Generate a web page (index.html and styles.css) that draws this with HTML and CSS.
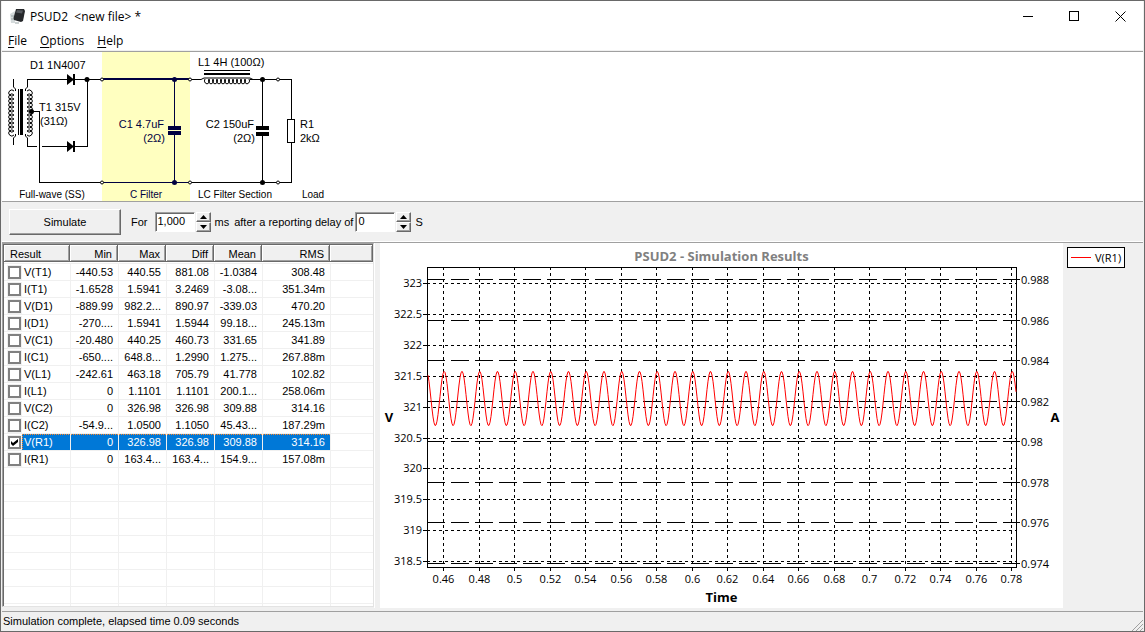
FILE: index.html
```
<!DOCTYPE html>
<html lang="en">
<head>
    <meta charset="UTF-8">
    <meta name="viewport" content="width=device-width, initial-scale=1.0">
    <title>PSUD2</title>
    <link rel="stylesheet" href="styles.css">
</head>
<body>
    <div class="window">
        <header class="titlebar">
            <svg class="app-icon" width="16" height="16" viewBox="0 0 16 16">
                <path d="M0 6l5-3v12H1z" fill="#d4dadb"/>
                <path d="M1 8h3M1 11h3M5 15h4" stroke="#9aa5a6"/>
                <path d="M6 1l8 0 1 2-2 10-2 1-7-2-.5-2z" fill="#26282b"/>
                <path d="M7 2l6 .5-1 3-6-1z" fill="#55595e"/>
            </svg>
            <span class="title">PSUD2&nbsp; &lt;new file&gt; *</span>
            <div class="window-buttons">
                <button aria-label="Minimize"><svg width="11" height="11"><path d="M0 5.500h10"/></svg></button>
                <button aria-label="Maximize"><svg width="11" height="11"><path d="M.5.5h9v9h-9z"/></svg></button>
                <button aria-label="Close"><svg width="11" height="11" class="smooth"><path d="M.5.5l10 10M10.500.500l-10 10"/></svg></button>
            </div>
        </header>
        <nav class="menu">
            <button><u>F</u>ile</button>
            <button><u>O</u>ptions</button>
            <button><u>H</u>elp</button>
        </nav>

        <section class="schematic">
            <svg width="340" height="149" viewBox="2 52 340 149">
                <rect x="102" y="52" width="88" height="149" fill="#ffffc0"/>
                <!-- transformer -->
                <g class="coil">
                    <path d="M13.500 79v8l2 2v2M13.500 145v-7l2-2v-2M27.500 79v8l-2 2v2M27.500 146v-8l-2-2v-2"/>
                    <path d="M14 91a3 3 0 1 0 0 4a3 3 0 1 0 0 4a3 3 0 1 0 0 4a3 3 0 1 0 0 4a3 3 0 1 0 0 4a3 3 0 1 0 0 4a3 3 0 1 0 0 4a3 3 0 1 0 0 4a3 3 0 1 0 0 4a3 3 0 1 0 0 4a3 3 0 1 0 0 4"/>
                    <path d="M27 91a3 3 0 1 1 0 4a3 3 0 1 1 0 4a3 3 0 1 1 0 4a3 3 0 1 1 0 4a3 3 0 1 1 0 4a3 3 0 1 1 0 4a3 3 0 1 1 0 4a3 3 0 1 1 0 4a3 3 0 1 1 0 4a3 3 0 1 1 0 4a3 3 0 1 1 0 4"/>
                </g>
                <path class="wire" d="M18.500 89v46M22.500 89v46"/>
                <path class="wire thick" d="M21 89v46"/>
                <!-- rectifier -->
                <path class="wire" d="M27 79.500h75M27 146.500h10M42 146.500h45M87.500 79v68M32 111.500h7.500v71h63"/>
                <path d="M67 74l7 5.500-7 5.500zM67 141l7 5.500-7 5.500z"/>
                <path class="wire thick" d="M74 74v11M74 141v11"/>
                <circle cx="87" cy="79.500" r="2.500"/>
                <circle cx="31.500" cy="111.500" r="2.500"/>
                <!-- C filter, selected -->
                <g class="selected">
                    <path class="wire thick" d="M103 79h86"/>
                    <path class="wire" d="M103 182.500h87M174.500 79v47M174.500 135v47"/>
                    <path d="M168 126h13v4h-13zM168 131h13v4h-13z"/>
                    <circle cx="174.500" cy="79.500" r="2.500"/>
                    <circle cx="174.500" cy="182.500" r="2.500"/>
                    <text x="164" y="128" class="end">C1 4.7uF</text>
                    <text x="165" y="142" class="end">(2Ω)</text>
                    <text x="146" y="198" class="name">C Filter</text>
                </g>
                <!-- LC section -->
                <path class="wire" d="M190 79.500h11M204 70.500h46M250 79.500h41.500v40M291.500 142v40.500H190M262.500 79v47M262.500 136v46"/>
                <path class="wire thick" d="M204 74h46"/>
                <path class="coil" d="M201 79.500l3-1.500h46l3 1.500M205 79a2.500 3 0 1 0 4 0a2.500 3 0 1 0 4 0a2.500 3 0 1 0 4 0a2.500 3 0 1 0 4 0a2.500 3 0 1 0 4 0a2.500 3 0 1 0 4 0a2.500 3 0 1 0 4 0a2.500 3 0 1 0 4 0a2.500 3 0 1 0 4 0a2.500 3 0 1 0 4 0a2.500 3 0 1 0 4 0"/>
                <path d="M256 126h13v4h-13zM256 132h13v4h-13z"/>
                <circle cx="262.500" cy="79.500" r="2.500"/>
                <circle cx="262.500" cy="182.500" r="2.500"/>
                <path class="wire" d="M287.500 119.500h7v23h-7z"/>
                <g class="terminal">
                    <circle cx="102" cy="79.500" r="1.500"/>
                    <circle cx="102" cy="182.500" r="1.500"/>
                    <circle cx="190" cy="79.500" r="1.500"/>
                    <circle cx="190" cy="182.500" r="1.500"/>
                    <circle cx="278" cy="79.500" r="1.500"/>
                    <circle cx="278" cy="182.500" r="1.500"/>
                </g>
                <text x="30" y="69">D1 1N4007</text>
                <text x="39" y="111">T1 315V</text>
                <text x="40" y="125">(31Ω)</text>
                <text x="198" y="66">L1 4H (100Ω)</text>
                <text x="254" y="128" class="end">C2 150uF</text>
                <text x="255" y="142" class="end">(2Ω)</text>
                <text x="300" y="128">R1</text>
                <text x="300" y="142">2kΩ</text>
                <text x="52" y="198" class="name">Full-wave (SS)</text>
                <text x="235" y="198" class="name">LC Filter Section</text>
                <text x="313" y="198" class="name">Load</text>
            </svg>
        </section>

        <form class="toolbar" onsubmit="return false">
            <button class="simulate">Simulate</button>
            <label for="duration">For</label>
            <div class="spin">
                <input type="text" id="duration" value="1,000">
                <div class="spin-buttons">
                    <button type="button" aria-label="Increase duration"><svg width="7" height="4"><path d="M0 4l3.500-4L7 4z"/></svg></button>
                    <button type="button" aria-label="Decrease duration"><svg width="7" height="4"><path d="M0 0h7L3.500 4z"/></svg></button>
                </div>
            </div>
            <span class="unit">ms</span>
            <label for="delay" class="delay">after a reporting delay of</label>
            <div class="spin">
                <input type="text" id="delay" value="0">
                <div class="spin-buttons">
                    <button type="button" aria-label="Increase delay"><svg width="7" height="4"><path d="M0 4l3.500-4L7 4z"/></svg></button>
                    <button type="button" aria-label="Decrease delay"><svg width="7" height="4"><path d="M0 0h7L3.500 4z"/></svg></button>
                </div>
            </div>
            <span class="unit">S</span>
        </form>

        <main class="content">
            <div class="list" id="list">
                <table>
                    <colgroup>
                        <col class="col-name"><col class="col-num"><col class="col-num"><col class="col-num"><col class="col-num"><col class="col-rms"><col>
                    </colgroup>
                    <thead>
                        <tr><th>Result</th><th>Min</th><th>Max</th><th>Diff</th><th>Mean</th><th>RMS</th><th></th></tr>
                    </thead>
                    <tbody id="rows">
                        <tr><td><label><input type="checkbox">V(T1)</label></td><td>-440.53</td><td>440.55</td><td>881.08</td><td>-1.0384</td><td>308.48</td><td></td></tr>
                        <tr><td><label><input type="checkbox">I(T1)</label></td><td>-1.6528</td><td>1.5941</td><td>3.2469</td><td>-3.08...</td><td>351.34m</td><td></td></tr>
                        <tr><td><label><input type="checkbox">V(D1)</label></td><td>-889.99</td><td>982.2...</td><td>890.97</td><td>-339.03</td><td>470.20</td><td></td></tr>
                        <tr><td><label><input type="checkbox">I(D1)</label></td><td>-270....</td><td>1.5941</td><td>1.5944</td><td>99.18...</td><td>245.13m</td><td></td></tr>
                        <tr><td><label><input type="checkbox">V(C1)</label></td><td>-20.480</td><td>440.25</td><td>460.73</td><td>331.65</td><td>341.89</td><td></td></tr>
                        <tr><td><label><input type="checkbox">I(C1)</label></td><td>-650....</td><td>648.8...</td><td>1.2990</td><td>1.275...</td><td>267.88m</td><td></td></tr>
                        <tr><td><label><input type="checkbox">V(L1)</label></td><td>-242.61</td><td>463.18</td><td>705.79</td><td>41.778</td><td>102.82</td><td></td></tr>
                        <tr><td><label><input type="checkbox">I(L1)</label></td><td>0</td><td>1.1101</td><td>1.1101</td><td>200.1...</td><td>258.06m</td><td></td></tr>
                        <tr><td><label><input type="checkbox">V(C2)</label></td><td>0</td><td>326.98</td><td>326.98</td><td>309.88</td><td>314.16</td><td></td></tr>
                        <tr><td><label><input type="checkbox">I(C2)</label></td><td>-54.9...</td><td>1.0500</td><td>1.1050</td><td>45.43...</td><td>187.29m</td><td></td></tr>
                        <tr class="active"><td><label><input type="checkbox" checked>V(R1)</label></td><td>0</td><td>326.98</td><td>326.98</td><td>309.88</td><td>314.16</td><td></td></tr>
                        <tr><td><label><input type="checkbox">I(R1)</label></td><td>0</td><td>163.4...</td><td>163.4...</td><td>154.9...</td><td>157.08m</td><td></td></tr>
                    </tbody>
                </table>
            </div>
            <div class="splitter"></div>
            <div class="chart" id="chart"></div>
            <aside class="legend">
                <div class="legend-box">
                    <span class="legend-line"></span>
                    <span>V(R1)</span>
                </div>
            </aside>
        </main>

        <footer class="status">
            <span>Simulation complete, elapsed time 0.09 seconds</span>
            <svg class="grip" width="12" height="12"><path d="M1 12L12 1M5 12l7-7M9 12l3-3"/></svg>
        </footer>
    </div>
    <script src="script.js"></script>
</body>
</html>
```

FILE: styles.css
```
* {
    box-sizing: border-box;
}
body {
    margin: 0;
    font-family: "Liberation Sans", Arial, sans-serif;
    font-size: 11px;
    color: #000;
    background: #f0f0f0;
}
button {
    font: inherit;
    color: inherit;
    padding: 0;
    border: none;
    background: none;
}
svg {
    display: block;
}
.window {
    display: flex;
    flex-direction: column;
    height: 100vh;
    border: 1px solid #696969;
    padding: 0 1px;
}

/* title and menu */
.titlebar {
    display: flex;
    align-items: center;
    height: 30px;
    padding-left: 8px;
    background: #fff;
    font: 12px "Open Sans", "Noto Sans", sans-serif;
}
.title {
    margin-left: 4px;
}
.window-buttons {
    display: flex;
    margin-left: auto;
}
.window-buttons button {
    display: flex;
    align-items: center;
    justify-content: center;
    width: 46px;
    height: 28px;
}
.window-buttons path {
    fill: none;
    stroke: #000;
    shape-rendering: crispEdges;
}
.window-buttons .smooth path {
    shape-rendering: auto;
}
.menu {
    display: flex;
    gap: 13px;
    height: 20px;
    padding-left: 6px;
    background: #fff;
    border-bottom: 1px solid #f0f0f0;
    font: 12px/19px "Open Sans", "Noto Sans", sans-serif;
}
.menu u {
    text-underline-offset: 2px;
}

/* circuit */
.schematic {
    height: 151px;
    overflow: hidden;
    background: #fff;
    border-top: 1px solid #a0a0a0;
    border-bottom: 1px solid #a0a0a0;
}
.schematic text {
    font-size: 11px;
}
.schematic .end {
    text-anchor: end;
}
.schematic .name {
    font-size: 10px;
    text-anchor: middle;
}
.wire {
    fill: none;
    stroke: #000;
    shape-rendering: crispEdges;
}
.thick {
    stroke-width: 2;
}
.coil {
    fill: none;
    stroke: #000;
}
.selected {
    fill: #000040;
}
.selected .wire {
    fill: none;
    stroke: #000040;
}
.terminal {
    fill: #fff;
    stroke: #000;
}

/* toolbar */
.toolbar {
    display: flex;
    align-items: center;
    height: 40px;
    padding-left: 7px;
    border-bottom: 1px solid #fff;
}
.simulate {
    width: 112px;
    height: 26px;
    margin-right: 10px;
    border: 1px solid;
    border-color: #fff #696969 #696969 #fff;
    box-shadow: inset -1px -1px #a0a0a0;
}
.spin {
    display: flex;
    align-items: center;
    gap: 1px;
    margin: 0 4px 0 7px;
}
.delay {
    margin-left: 5px;
}
.delay + .spin {
    margin-left: 2px;
}
.spin input {
    width: 40px;
    height: 20px;
    padding: 0 2px 2px;
    border: 1px solid;
    border-color: #a0a0a0 #fff #fff #a0a0a0;
    box-shadow: inset 1px 1px #696969;
    background: #fff;
    font: inherit;
}
.spin-buttons button {
    display: flex;
    align-items: center;
    justify-content: center;
    width: 15px;
    height: 10px;
    border: 1px solid;
    border-color: #fff #696969 #696969 #fff;
    box-shadow: inset -1px -1px #a0a0a0;
}

/* results list */
.content {
    display: flex;
    flex: 1;
    min-height: 0;
    border-top: 1px solid #a0a0a0;
}
.list {
    flex: none;
    width: 372px;
    margin-bottom: 1px;
    overflow: hidden;
    background: #fff;
    border: 1px solid;
    border-color: #a0a0a0 #e3e3e3 #e3e3e3 #a0a0a0;
}
table {
    width: 100%;
    table-layout: fixed;
    border-spacing: 0;
    border-top: 1px solid #696969;
    border-left: 1px solid #696969;
}
.col-name {
    width: 66px;
}
.col-num {
    width: 48px;
}
.col-rms {
    width: 68px;
}
th {
    height: 18px;
    padding: 0 6px 0 0;
    font-weight: normal;
    text-align: right;
    line-height: 16px;
    background: #f0f0f0;
    background-clip: padding-box;
    border-bottom: 1px solid #fff;
    box-shadow: inset -1px -1px #696969, inset 1px 1px #fff, inset -2px -2px #a0a0a0;
}
th:first-child {
    padding-left: 6px;
    text-align: left;
}
td {
    height: 17px;
    padding: 0 5px 0 0;
    line-height: 16px;
    text-align: right;
    white-space: nowrap;
    border-top: 1px solid #f0f0f0;
    border-left: 1px solid #f0f0f0;
}
td:first-child {
    padding: 0 0 0 4px;
    border-left: none;
    text-align: left;
}
td label {
    display: flex;
    align-items: center;
    gap: 3px;
    height: 16px;
}
td input {
    appearance: none;
    width: 13px;
    height: 13px;
    margin: 1px 0 0;
    border: 2px solid #808080;
    background: #fff;
    box-shadow: 0 0 0 1px #f0f0f0;
}
td input:checked::after {
    content: "";
    display: block;
    height: 9px;
    background: #000;
    clip-path: polygon(1px 3px, 3px 5px, 8px 1px, 8px 4px, 3px 8px, 1px 6px);
}
/* selected row with the dotted focus line along its top */
.active td {
    color: #fff;
    background: repeating-linear-gradient(to right, #ff8728 0 1px, #0078d7 1px 2px) top / 100% 1px no-repeat, #0078d7;
    background-clip: padding-box;
}
.active td:first-child {
    background: linear-gradient(#fff, #fff) left / 18px 100% no-repeat,
        repeating-linear-gradient(to right, #ff8728 0 1px, #0078d7 1px 2px) top / 100% 1px no-repeat,
        repeating-linear-gradient(#ff8728 0 1px, #0078d7 1px 2px) 18px 0 / 1px 100% no-repeat, #0078d7;
    background-clip: padding-box;
}
.active td:last-child {
    background: #fff;
}

/* chart */
.splitter {
    width: 6px;
    background: #f0f0f0;
    border-left: 1px solid #fff;
}
.chart {
    flex: 1;
    min-width: 0;
    overflow: hidden;
    background: #fff;
    font-family: "Open Sans", "Noto Sans", sans-serif;
}
.chart .axis {
    fill: none;
    stroke: #000;
    shape-rendering: crispEdges;
}
.chart .dots {
    stroke-dasharray: 3 3;
}
.chart .dashes {
    stroke-dasharray: 18 6;
}
.chart .trace {
    fill: none;
    stroke: #f00;
}
.chart .end {
    text-anchor: end;
}
.chart .mid {
    text-anchor: middle;
}
.chart .bold {
    font-size: 13px;
    font-weight: bold;
    text-anchor: middle;
}
.chart .heading {
    fill: #808080;
}
.legend {
    width: 80px;
    padding: 4px;
    font-family: "Open Sans", "Noto Sans", sans-serif;
}
.legend-box {
    display: flex;
    align-items: center;
    gap: 4px;
    width: 58px;
    height: 21px;
    padding-left: 3px;
    background: #fff;
    border: 1px solid #000;
}
.legend-line {
    width: 20px;
    height: 1px;
    background: #f00;
}

/* status bar */
.status {
    display: flex;
    flex: none;
    justify-content: space-between;
    align-items: flex-start;
    height: 20px;
    margin-top: 3px;
    padding-left: 1px;
    border-top: 1px solid #a0a0a0;
    line-height: 18px;
}
.grip {
    align-self: flex-end;
    stroke: #a0a0a0;
}
```

FILE: script.js
```
// fill the rest of the list with empty grid rows
function fillRows() {
    const list = document.getElementById('list');
    const rows = document.getElementById('rows');
    rows.querySelectorAll('.empty').forEach(row => row.remove());
    const used = rows.rows.length * 17 + 18;
    const count = Math.ceil((list.clientHeight - used) / 17);
    for (let i = 0; i < count; i++) {
        const row = rows.insertRow();
        row.className = 'empty';
        for (let c = 0; c < 7; c++) row.insertCell();
    }
}

const time = { min: 0.4508, max: 0.7826 };
const volts = { min: 318.414, max: 323.268 };
const amps = { min: 0.97383, max: 0.988613 };

function drawChart() {
    const box = document.getElementById('chart');
    const w = box.clientWidth;
    const h = box.clientHeight;
    const left = 47, right = w - 47, top = 24, bottom = h - 41;
    const px = v => left + (v - time.min) / (time.max - time.min) * (right - left);
    const py = (v, axis) => bottom - (v - axis.min) / (axis.max - axis.min) * (bottom - top);
    const snap = v => Math.floor(v) + 0.5;
    const label = (x, y, text, cls) => `<text x="${x}" y="${y}" class="${cls}">${text}</text>`;
    const line = (d, cls) => `<path d="${d}" class="axis ${cls}"/>`;
    let out = '';

    for (let i = 0; i <= 16; i++) {
        const t = 0.46 + i * 0.02;
        const x = Math.round(px(t)) + 0.5;
        out += line(`M${x} ${top}V${bottom}`, 'dots');
        out += line(`M${x} ${bottom}v4`, '');
        out += label(x, bottom + 16, +t.toFixed(2), 'mid');
    }
    for (let v = 318.5; v <= 323; v += 0.5) {
        const y = snap(py(v, volts));
        out += line(`M${left} ${y}H${right}`, 'dots');
        out += line(`M${left - 4} ${y}h4`, '');
        out += label(left - 5, y + 3.5, v, 'end');
    }
    for (let i = 0; i < 8; i++) {
        const a = 0.974 + i * 0.002;
        const y = snap(py(a, amps));
        out += line(`M${left} ${y}H${right}`, 'dashes');
        out += line(`M${right} ${y}h4`, '');
        out += label(right + 5, y + 4.5, +a.toFixed(3), '');
    }
    out += line(`M${left + 0.5} ${top + 0.5}H${right + 0.5}V${bottom + 0.5}H${left + 0.5}z`, '');

    // 100Hz ripple
    const points = [];
    for (let x = left + 1; x <= right; x++) {
        const t = time.min + (x - left) / (right - left) * (time.max - time.min);
        const v = 321.14 + 0.44 * Math.cos(2 * Math.PI * (t - 0.4605) * 100);
        points.push(x + ',' + py(v, volts).toFixed(1));
    }
    out += `<polyline class="trace" points="${points.join(' ')}"/>`;

    const cx = (left + right) / 2;
    out += label(cx, 18, 'PSUD2 - Simulation Results', 'bold heading');
    out += label(cx, h - 6, 'Time', 'bold');
    out += label(9, (top + bottom) / 2 + 5, 'V', 'bold');
    out += label(w - 8, (top + bottom) / 2 + 5, 'A', 'bold');
    box.innerHTML = `<svg width="${w}" height="${h}">${out}</svg>`;
}

function layout() {
    fillRows();
    drawChart();
}
window.addEventListener('resize', layout);
layout();
```
